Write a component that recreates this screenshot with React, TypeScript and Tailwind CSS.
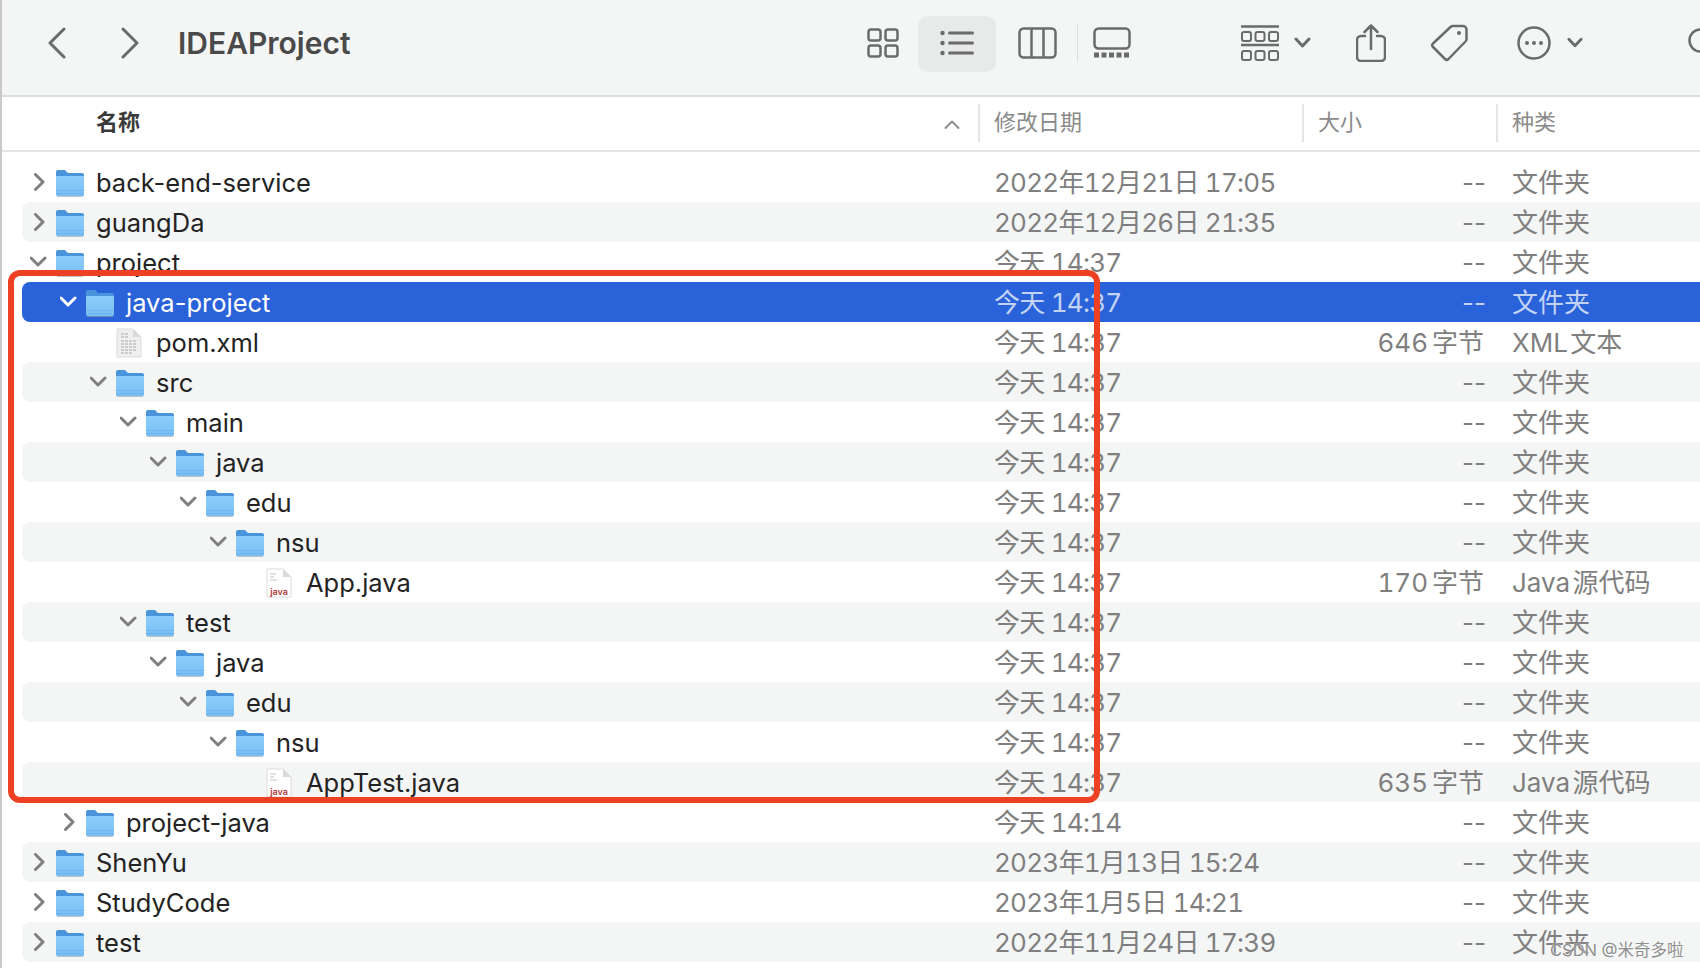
type Row = {
  level: number
  name: string
  date: string
  size: string
  kind: string
  icon: 'folder' | 'xml' | 'java'
  open?: boolean
  selected?: boolean
}

const today = '今天 14:37'
const dir = '文件夹'

const rows: Row[] = [
  { level: 0, name: 'back-end-service', date: '2022年12月21日 17:05', size: '--', kind: dir, icon: 'folder' },
  { level: 0, name: 'guangDa', date: '2022年12月26日 21:35', size: '--', kind: dir, icon: 'folder' },
  { level: 0, name: 'project', date: today, size: '--', kind: dir, icon: 'folder', open: true },
  { level: 1, name: 'java-project', date: today, size: '--', kind: dir, icon: 'folder', open: true, selected: true },
  { level: 2, name: 'pom.xml', date: today, size: '646 字节', kind: 'XML 文本', icon: 'xml' },
  { level: 2, name: 'src', date: today, size: '--', kind: dir, icon: 'folder', open: true },
  { level: 3, name: 'main', date: today, size: '--', kind: dir, icon: 'folder', open: true },
  { level: 4, name: 'java', date: today, size: '--', kind: dir, icon: 'folder', open: true },
  { level: 5, name: 'edu', date: today, size: '--', kind: dir, icon: 'folder', open: true },
  { level: 6, name: 'nsu', date: today, size: '--', kind: dir, icon: 'folder', open: true },
  { level: 7, name: 'App.java', date: today, size: '170 字节', kind: 'Java 源代码', icon: 'java' },
  { level: 3, name: 'test', date: today, size: '--', kind: dir, icon: 'folder', open: true },
  { level: 4, name: 'java', date: today, size: '--', kind: dir, icon: 'folder', open: true },
  { level: 5, name: 'edu', date: today, size: '--', kind: dir, icon: 'folder', open: true },
  { level: 6, name: 'nsu', date: today, size: '--', kind: dir, icon: 'folder', open: true },
  { level: 7, name: 'AppTest.java', date: today, size: '635 字节', kind: 'Java 源代码', icon: 'java' },
  { level: 1, name: 'project-java', date: '今天 14:14', size: '--', kind: dir, icon: 'folder' },
  { level: 0, name: 'ShenYu', date: '2023年1月13日 15:24', size: '--', kind: dir, icon: 'folder' },
  { level: 0, name: 'StudyCode', date: '2023年1月5日 14:21', size: '--', kind: dir, icon: 'folder' },
  { level: 0, name: 'test', date: '2022年11月24日 17:39', size: '--', kind: dir, icon: 'folder' },
]

const ink = '#6a6b6b'

function FolderIcon() {
  return (
    <svg width="28" height="28" viewBox="0 0 28 28" className="shrink-0">
      <defs>
        <linearGradient id="folderBody" x1="0" y1="0" x2="0" y2="1">
          <stop offset="0" stopColor="#8dcdfb" />
          <stop offset="1" stopColor="#78bff6" />
        </linearGradient>
      </defs>
      <path d="M0 25V3a2 2 0 0 1 2-2h7l3 3h14a2 2 0 0 1 2 2v19a2 2 0 0 1-2 2H2a2 2 0 0 1-2-2z" fill="#4a94dc" />
      <path d="M0 25V8a1 1 0 0 1 1-1h26a1 1 0 0 1 1 1v17a2 2 0 0 1-2 2H2a2 2 0 0 1-2-2z" fill="url(#folderBody)" />
      <path d="M0 21.500h28M0 24.500h28" stroke="#5da5e2" strokeWidth="0.8" opacity="0.6" />
      <path d="M1 27.500h26" stroke="#9a9fa5" strokeWidth="1" opacity="0.6" />
    </svg>
  )
}

function DocIcon({ java }: { java: boolean }) {
  return (
    <svg width="26" height="30" viewBox="0 0 26 30" className="shrink-0">
      <path d="M1 1h16l8 8v20H1z" fill={java ? '#ffffff' : '#efefef'} stroke="#dcdcdc" strokeWidth="1" />
      <path d="M17 1v8h8z" fill="#d9d9d9" />
      {java ? (
        <>
          <path d="M4 6h6M4 9h4M4 12h7" stroke="#c4c4c4" strokeWidth="1" />
          <text x="13" y="27" textAnchor="middle" fontSize="9" fontWeight="600" fill="#b03a3a" fontFamily="Inter, sans-serif">
            java
          </text>
        </>
      ) : (
        <path
          d="M5 6h8M5 9h8M5 13h16M5 16h16M5 19h16M5 22h16M5 25h12"
          stroke="#a9a9a9"
          strokeWidth="1.2"
          strokeDasharray="3 1"
        />
      )}
    </svg>
  )
}

function Chevron({ open, color }: { open?: boolean; color: string }) {
  return (
    <svg width="18" height="18" viewBox="0 0 18 18" className="shrink-0">
      <path
        d={open ? 'M1 5l7 7 7-7' : 'M5.500 1.500l7.500 7.500-7.500 7.500'}
        fill="none"
        stroke={color}
        strokeWidth="3"
        strokeLinecap="round"
        strokeLinejoin="round"
      />
    </svg>
  )
}

function FileRow({ row, index }: { row: Row; index: number }) {
  const striped = index % 2 === 1
  const bg = row.selected ? 'bg-[#2a62d9]' : striped ? 'bg-[#f4f5f5]' : ''
  const muted = row.selected ? 'text-[#c3d3f6]' : 'text-[#7f7f7f]'
  const sizeStyle = row.size === '--' ? '' : 'pr-[2px] tabular-nums [word-spacing:-3px]'

  return (
    <div className={`flex h-10 items-center rounded-l-lg text-[26px] leading-none ${bg}`}>
      <div className="flex w-[972px] shrink-0 items-center" style={{ paddingLeft: row.level * 30 }}>
        <div className="flex w-[34px] shrink-0 justify-center">
          {row.icon === 'folder' && <Chevron open={row.open} color={row.selected ? '#ffffff' : '#7f7f7f'} />}
        </div>
        <div className="mt-[2px]">
          {row.icon === 'folder' ? <FolderIcon /> : <DocIcon java={row.icon === 'java'} />}
        </div>
        <span
          className={`pt-[2px] text-[25.5px] whitespace-nowrap ${row.icon === 'folder' ? 'ml-3' : 'ml-[14px]'} ${row.selected ? 'text-white' : 'text-[#232323]'}`}
        >
          {row.name}
        </span>
      </div>
      <div className={`w-[324px] shrink-0 pt-[2px] tracking-[-0.75px] whitespace-nowrap tabular-nums ${muted}`}>{row.date}</div>
      <div className={`w-[168px] shrink-0 pt-[2px] text-right whitespace-nowrap ${sizeStyle} ${muted}`}>{row.size}</div>
      <div className={`ml-[26px] pt-[2px] whitespace-nowrap [word-spacing:-5px] ${muted}`}>{row.kind}</div>
    </div>
  )
}

function Toolbar() {
  return (
    <div className="flex h-[97px] items-center border-b-2 border-[#dcdddd] bg-[#f4f6f5] pb-[10px]">
      <svg width="18" height="32" viewBox="0 0 18 32" className="ml-[46px] shrink-0">
        <path d="M16 2L2 16l14 14" fill="none" stroke={ink} strokeWidth="3" strokeLinecap="round" strokeLinejoin="round" />
      </svg>
      <svg width="18" height="32" viewBox="0 0 18 32" className="ml-[55px] shrink-0">
        <path d="M2 2l14 14L2 30" fill="none" stroke={ink} strokeWidth="3" strokeLinecap="round" strokeLinejoin="round" />
      </svg>
      <div className="mt-[2px] ml-[39px] text-[30px] font-semibold text-[#4a4a4a]">IDEAProject</div>

      <div className="mr-[-18px] ml-auto flex shrink-0 items-center" style={{ color: ink }}>
        {/* icon view */}
        <svg width="32" height="30" viewBox="0 0 32 30" fill="none" stroke="currentColor" strokeWidth="2.5" className="shrink-0">
          <rect x="1.500" y="1.500" width="12" height="11" rx="2.500" />
          <rect x="18.500" y="1.500" width="12" height="11" rx="2.500" />
          <rect x="1.500" y="17.500" width="12" height="11" rx="2.500" />
          <rect x="18.500" y="17.500" width="12" height="11" rx="2.500" />
        </svg>
        {/* list view, selected */}
        <div className="mt-[2px] ml-[19px] flex h-14 w-[78px] shrink-0 items-center justify-center rounded-[10px] bg-[#e8e9e9]">
          <svg width="34" height="26" viewBox="0 0 34 26" fill="currentColor" className="mt-[-2px]">
            <circle cx="2.500" cy="3" r="2.200" />
            <circle cx="2.500" cy="13" r="2.200" />
            <circle cx="2.500" cy="23" r="2.200" />
            <rect x="8" y="1.500" width="26" height="3" rx="1.500" />
            <rect x="8" y="11.500" width="26" height="3" rx="1.500" />
            <rect x="8" y="21.500" width="26" height="3" rx="1.500" />
          </svg>
        </div>
        {/* column view */}
        <svg width="39" height="32" viewBox="0 0 39 32" fill="none" stroke="currentColor" strokeWidth="2.5" className="ml-[22px] shrink-0">
          <rect x="1.500" y="1.500" width="36" height="29" rx="4" />
          <path d="M13.500 2v28M25.500 2v28" />
        </svg>
        <div className="ml-5 h-[39px] w-px shrink-0 bg-[#dddede]" />
        {/* gallery view */}
        <svg width="38" height="32" viewBox="0 0 38 32" fill="none" stroke="currentColor" strokeWidth="2.5" className="ml-[15px] shrink-0">
          <rect x="1.500" y="1.500" width="35" height="20" rx="4" />
          <path d="M1 28h36" strokeWidth="5" strokeDasharray="5 2.5" />
        </svg>
        {/* group by */}
        <svg width="38" height="36" viewBox="0 0 38 36" fill="none" stroke="currentColor" strokeWidth="2" className="ml-[110px] shrink-0">
          <path d="M0 1.500h38M0 20h38" strokeWidth="2.5" />
          <rect x="1" y="7" width="9" height="9" rx="2" />
          <rect x="14.500" y="7" width="9" height="9" rx="2" />
          <rect x="28" y="7" width="9" height="9" rx="2" />
          <rect x="1" y="26" width="9" height="9" rx="2" />
          <rect x="14.500" y="26" width="9" height="9" rx="2" />
          <rect x="28" y="26" width="9" height="9" rx="2" />
        </svg>
        <svg width="17" height="11" viewBox="0 0 17 11" fill="none" stroke="currentColor" strokeWidth="3" strokeLinecap="round" strokeLinejoin="round" className="ml-[15px] shrink-0">
          <path d="M2 2l6.500 7L15 2" />
        </svg>
        {/* share */}
        <svg width="30" height="38" viewBox="0 0 30 38" fill="none" stroke="currentColor" strokeWidth="2.5" strokeLinecap="round" strokeLinejoin="round" className="ml-[45px] shrink-0">
          <path d="M9 12H5a4 4 0 0 0-4 4v17a4 4 0 0 0 4 4h20a4 4 0 0 0 4-4V16a4 4 0 0 0-4-4h-4" />
          <path d="M15 25V1.500M8.500 8L15 1.500 21.500 8" />
        </svg>
        {/* tags */}
        <svg width="38" height="38" viewBox="0 0 38 38" fill="none" stroke="currentColor" strokeWidth="2.5" strokeLinejoin="round" className="ml-11 shrink-0">
          <path d="M23 2h10a3.500 3.500 0 0 1 3.500 3.500V15a4 4 0 0 1-1 2.500L18.500 35a2.500 2.500 0 0 1-3.500 0L3 23a2.500 2.500 0 0 1 0-3.500L20.500 3a4 4 0 0 1 2.500-1z" />
          <circle cx="29" cy="9" r="2" fill="currentColor" stroke="none" />
        </svg>
        {/* action menu */}
        <svg width="34" height="34" viewBox="0 0 34 34" fill="none" stroke="currentColor" strokeWidth="2.5" className="ml-[49px] shrink-0">
          <circle cx="17" cy="17" r="15.500" />
          <circle cx="10" cy="17" r="2" fill="currentColor" stroke="none" />
          <circle cx="17" cy="17" r="2" fill="currentColor" stroke="none" />
          <circle cx="24" cy="17" r="2" fill="currentColor" stroke="none" />
        </svg>
        <svg width="16" height="11" viewBox="0 0 17 11" fill="none" stroke="currentColor" strokeWidth="3" strokeLinecap="round" strokeLinejoin="round" className="ml-4 shrink-0">
          <path d="M2 2l6.500 7L15 2" />
        </svg>
        {/* search, cut off by the window */}
        <svg width="30" height="30" viewBox="0 0 30 30" fill="none" stroke="currentColor" strokeWidth="2.5" strokeLinecap="round" className="ml-[105px] shrink-0">
          <circle cx="12.500" cy="12.500" r="11" />
          <path d="M20.500 20.500L29 29" />
        </svg>
      </div>
    </div>
  )
}

function ColumnHeader() {
  return (
    <div className="flex h-[55px] items-center border-b-2 border-[#e4e5e5] pb-[2px] text-[22px] text-[#8a8a8a]">
      <div className="flex w-[976px] shrink-0 items-center">
        <span className="ml-[94px] font-bold text-[#3a3a3a]">名称</span>
        <svg width="16" height="9" viewBox="0 0 16 9" fill="none" stroke="#8a8a8a" strokeWidth="1.800" strokeLinecap="round" strokeLinejoin="round" className="mt-[3px] mr-[18px] ml-auto">
          <path d="M1.500 8L8 1.500 14.500 8" />
        </svg>
      </div>
      <div className="flex h-[38px] w-[324px] shrink-0 items-center border-l-2 border-[#e4e5e5] pl-[14px]">修改日期</div>
      <div className="flex h-[38px] w-[194px] shrink-0 items-center border-l-2 border-[#e4e5e5] pl-[14px]">大小</div>
      <div className="flex h-[38px] flex-1 items-center border-l-2 border-[#e4e5e5] pl-[14px]">种类</div>
    </div>
  )
}

export default function App() {
  return (
    <div
      className="relative h-[968px] w-[1700px] overflow-hidden border-l-2 border-[#c9c9c9] bg-white"
      style={{ fontFamily: 'Inter, "Noto Sans CJK SC", sans-serif' }}
    >
      <Toolbar />
      <ColumnHeader />
      <div className="mt-[10px] ml-5">
        {rows.map((row, i) => (
          <FileRow key={i} row={row} index={i} />
        ))}
      </div>

      {/* annotation drawn on the screenshot */}
      <div className="absolute top-[270px] left-[6px] h-[533px] w-[1092px] rounded-[12px] border-[6px] border-[#ee4023]" />
      <div className="absolute top-[938px] left-[1548px] text-[16.5px] whitespace-nowrap text-[#8f8f8f] [text-shadow:0_0_2px_#ffffff]">
        CSDN @米奇多啦
      </div>
    </div>
  )
}
